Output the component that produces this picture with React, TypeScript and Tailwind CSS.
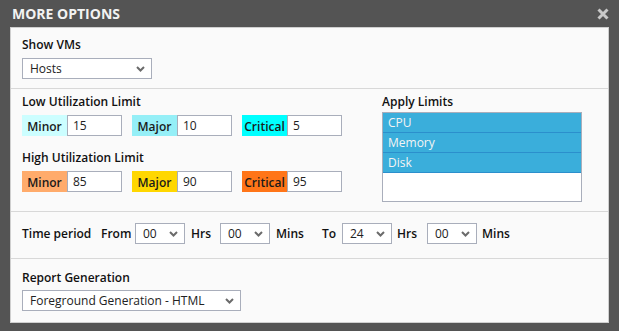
import React from 'react';

const font = { fontFamily: '"Open Sans", "Noto Sans", sans-serif' };

function Chevron() {
  return (
    <svg width="9" height="6" viewBox="0 0 9 6" className="shrink-0">
      <polyline points="1,1 4.5,4.5 8,1" fill="none" stroke="#6b6b6b" strokeWidth="2" />
    </svg>
  );
}

function Select({ value, className }: { value: string; className: string }) {
  return (
    <div
      className={`flex h-[21px] items-center justify-between border border-[#a9aebb] bg-white pl-[7px] pr-[6px] text-[12px] text-[#222] ${className}`}
    >
      <span className="leading-none">{value}</span>
      <Chevron />
    </div>
  );
}

function LimitField({ label, value, color }: { label: string; value: string; color: string }) {
  return (
    <div className="flex h-[21px]">
      <div className={`flex w-[45px] items-center justify-center pt-[2px] text-[12px] font-semibold text-[#1a1a1a] ${color}`}>
        {label}
      </div>
      <div className="flex w-[55px] items-center border border-[#a9aebb] bg-white pl-[5px] text-[12px] text-[#222]">
        {value}
      </div>
    </div>
  );
}

const Divider = () => <div className="h-px bg-[#d8d8d8]" />;

export default function App() {
  return (
    <div className="flex h-[331px] w-[619px] flex-col bg-[#545454]" style={font}>
      <div className="flex h-[27px] items-center justify-between pl-[12px] pr-[10px]">
        <span className="text-[14px] font-bold text-[#f2f2f2]">MORE OPTIONS</span>
        <svg width="12" height="12" viewBox="0 0 12 12">
          <path d="M1.5 1.5 L10.5 10.5 M10.5 1.5 L1.5 10.5" stroke="#c9c9c9" strokeWidth="3" />
        </svg>
      </div>

      <div className="ml-[10px] h-[296px] w-[599px] border border-[#cfcfcf] bg-[#fafafa] text-[#111]">
        <div className="px-[11px] pt-[9px] pb-[9px]">
          <div className="text-[12px] font-semibold leading-[16px]">Show VMs</div>
          <Select value="Hosts" className="mt-[5px] w-[130px]" />
        </div>
        <Divider />

        <div className="flex px-[11px] pt-[5px] pb-[9px]">
          <div className="w-[360px]">
            <div className="text-[12px] font-semibold leading-[16px]">Low Utilization Limit</div>
            <div className="mt-[5px] flex gap-[10px]">
              <LimitField label="Minor" value="15" color="bg-[#ccfeff]" />
              <LimitField label="Major" value="10" color="bg-[#95eff7]" />
              <LimitField label="Critical" value="5" color="bg-[#00ffff]" />
            </div>
            <div className="mt-[14px] text-[12px] font-semibold leading-[16px]">High Utilization Limit</div>
            <div className="mt-[5px] flex gap-[10px]">
              <LimitField label="Minor" value="85" color="bg-[#ffab6b]" />
              <LimitField label="Major" value="90" color="bg-[#ffd700]" />
              <LimitField label="Critical" value="95" color="bg-[#ff7518]" />
            </div>
          </div>
          <div>
            <div className="text-[12px] font-semibold leading-[16px]">Apply Limits</div>
            <div className="mt-[2px] h-[90px] w-[200px] border border-[#a9aebb] bg-white text-[12px] text-[#f4f4f4]">
              {['CPU', 'Memory', 'Disk'].map((item) => (
                <div
                  key={item}
                  className="flex h-[20px] items-center border-b border-[#2b8fcc] bg-[#3aaedb] pl-[5px]"
                >
                  {item}
                </div>
              ))}
            </div>
          </div>
        </div>
        <Divider />

        <div className="flex items-center px-[11px] pt-[11px] pb-[14px] text-[12px] font-semibold">
          <span className="w-[79px]">Time period</span>
          <span className="w-[34px]">From</span>
          <Select value="00" className="w-[50px] font-normal" />
          <span className="ml-[6px] w-[29px]">Hrs</span>
          <Select value="00" className="w-[50px] font-normal" />
          <span className="ml-[6px] w-[46px]">Mins</span>
          <span className="w-[20px]">To</span>
          <Select value="24" className="w-[50px] font-normal" />
          <span className="ml-[5px] w-[30px]">Hrs</span>
          <Select value="00" className="w-[50px] font-normal" />
          <span className="ml-[5px]">Mins</span>
        </div>
        <Divider />

        <div className="px-[11px] pt-[11px]">
          <div className="text-[12px] font-semibold leading-[16px]">Report Generation</div>
          <Select value="Foreground Generation - HTML" className="mt-[4px] w-[219px]" />
        </div>
      </div>
    </div>
  );
}
